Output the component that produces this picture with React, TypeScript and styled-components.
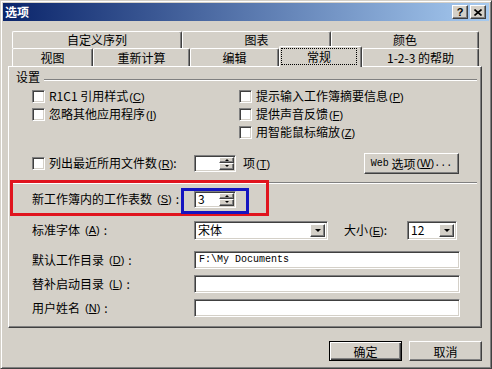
import React from 'react';
import styled, { createGlobalStyle, css } from 'styled-components';

const face = '#D4D0C8';
const shadow = '#808080';
const dark = '#404040';

const GlobalStyle = createGlobalStyle`
  html, body {
    margin: 0;
    padding: 0;
    background: ${face};
  }
  body {
    font-family: "Noto Sans CJK SC", "Liberation Sans", sans-serif;
    font-size: 12px;
    line-height: 14px;
    color: #000;
  }
`;

const raised = css`
  box-sizing: border-box;
  border: 1px solid;
  border-color: #fff ${dark} ${dark} #fff;
  box-shadow: inset -1px -1px ${shadow};
  background: ${face};
`;

const sunken = css`
  box-sizing: border-box;
  border: 1px solid;
  border-color: ${shadow} #fff #fff ${shadow};
  box-shadow: inset 1px 1px ${dark}, inset -1px -1px ${face};
  background: #fff;
`;

const Window = styled.div`
  position: relative;
  width: 492px;
  height: 369px;
  box-sizing: border-box;
  padding: 2px;
  border: 1px solid;
  border-color: ${face} ${dark} ${dark} ${face};
  box-shadow: inset 1px 1px #fff, inset -1px -1px ${shadow};
  background: ${face};
  display: flex;
  flex-direction: column;
`;

const TitleBar = styled.div`
  height: 18px;
  display: flex;
  align-items: center;
  padding: 0 3px 0 2px;
  background: linear-gradient(90deg, #0a246a, #a6caf0);
`;

const Title = styled.span`
  flex: 1;
  color: #fff;
  font-weight: bold;
  font-size: 12px;
`;

const TitleButton = styled.button`
  ${raised};
  width: 16px;
  height: 14px;
  padding: 0;
  margin-left: 2px;
  display: flex;
  align-items: center;
  justify-content: center;
  font-family: "Liberation Sans", sans-serif;
  font-weight: bold;
  font-size: 11px;
  line-height: 11px;
  color: #000;
`;

const TabStrip = styled.div`
  margin: 10px 0 0 9px;
  width: 467px;
  display: flex;
  flex-direction: column;
`;

const TabRow = styled.div<{ $h: number }>`
  height: ${(p) => p.$h}px;
  display: flex;
  align-items: flex-end;
`;

const Tab = styled.div<{ $w: number; $active?: boolean }>`
  width: ${(p) => p.$w}px;
  height: 100%;
  box-sizing: border-box;
  border-top: 1px solid #fff;
  border-left: 1px solid #fff;
  border-right: 1px solid ${dark};
  box-shadow: inset -1px 0 ${shadow};
  border-radius: 2px 2px 0 0;
  background: ${face};
  display: flex;
  align-items: center;
  justify-content: center;
  ${(p) =>
    p.$active &&
    css`
      position: relative;
      z-index: 1;
      height: 21px;
      margin-bottom: -1px;
      justify-content: flex-start;
      padding: 1px 0 0 1px;
      align-items: flex-start;
    `}
`;

const Focus = styled.span`
  width: 76px;
  height: 17px;
  box-sizing: border-box;
  border: 1px dotted #000;
  display: flex;
  align-items: center;
  justify-content: center;
`;

const Panel = styled.div`
  margin-left: 5px;
  width: 474px;
  height: 262px;
  box-sizing: border-box;
  border: 1px solid;
  border-color: #fff ${dark} ${dark} #fff;
  box-shadow: inset -1px -1px ${shadow};
  padding: 0 4px 0 1px;
  display: flex;
  flex-direction: column;
`;

const GroupHead = styled.div`
  height: 20px;
  margin-left: 6px;
  display: flex;
  align-items: center;
`;

const Etch = styled.div<{ $gap?: number }>`
  flex: 1;
  height: 0;
  border-top: 1px solid ${shadow};
  border-bottom: 1px solid #fff;
  margin-left: ${(p) => p.$gap ?? 0}px;
  margin-top: ${(p) => (p.$gap ? 6 : 0)}px;
`;

const CheckGrid = styled.div`
  margin-left: 22px;
  display: grid;
  grid-template-columns: 207px 1fr;
  grid-template-rows: repeat(3, 18px);
  grid-auto-flow: column;
`;

const CheckItem = styled.label`
  display: flex;
  align-items: center;
  gap: 4px;
  white-space: nowrap;
`;

const Box = styled.span`
  ${sunken};
  width: 13px;
  height: 13px;
  flex: none;
`;

const Row = styled.div<{ $top: number; $h: number; $flush?: boolean }>`
  margin-top: ${(p) => p.$top}px;
  height: ${(p) => p.$h}px;
  margin-left: ${(p) => (p.$flush ? 0 : 22)}px;
  display: flex;
  align-items: center;
  white-space: nowrap;
`;

const LabelCell = styled.div`
  width: 162px;
  flex: none;
  display: flex;
  align-items: center;
  gap: 4px;
`;

const Spin = styled.div`
  ${sunken};
  width: 42px;
  height: 17px;
  padding: 1px;
  display: flex;
`;

const SpinValue = styled.span`
  flex: 1;
  padding-left: 2px;
  display: flex;
  align-items: center;
`;

const SpinButtons = styled.div`
  width: 15px;
  display: flex;
  flex-direction: column;
`;

const SpinButton = styled.span<{ $down?: boolean }>`
  ${raised};
  flex: 1;
  display: flex;
  align-items: center;
  justify-content: center;
  &::after {
    content: '';
    border-left: 2px solid transparent;
    border-right: 2px solid transparent;
    ${(p) =>
      p.$down
        ? css`border-top: 2px solid #000;`
        : css`border-bottom: 2px solid #000;`}
  }
`;

const Unit = styled.span`
  margin-left: 7px;
`;

const PushButton = styled.button<{ $w: number; $default?: boolean }>`
  ${raised};
  width: ${(p) => p.$w}px;
  height: ${(p) => (p.$default ? 20 : 21)}px;
  padding: 0;
  font-family: "Noto Sans CJK SC", sans-serif;
  font-size: 12px;
  color: #000;
  display: flex;
  align-items: center;
  justify-content: center;
  ${(p) =>
    p.$default &&
    css`
      border: 1px solid #000;
      box-shadow: inset 1px 1px #fff, inset -1px -1px ${dark}, inset -2px -2px ${shadow};
    `}
`;

const DialogButton = styled(PushButton)`
  height: 20px;
`;

const WebButton = styled(PushButton)`
  margin-left: auto;
  margin-right: 18px;
`;

const Mono = styled.span`
  font-family: "Liberation Mono", monospace;
  font-size: 10px;
`;

const Key = styled.span`
  font-family: "Liberation Sans", sans-serif;
  font-size: 11px;
  margin-left: 1px;
`;

const Combo = styled.div<{ $w: number }>`
  ${sunken};
  width: ${(p) => p.$w}px;
  height: 19px;
  padding: 2px;
  display: flex;
`;

const ComboText = styled.span`
  flex: 1;
  padding-left: 1px;
  display: flex;
  align-items: center;
`;

const DropButton = styled.span`
  ${raised};
  width: 15px;
  display: flex;
  align-items: center;
  justify-content: center;
  &::after {
    content: '';
    margin-top: 1px;
    border-left: 3px solid transparent;
    border-right: 3px solid transparent;
    border-top: 3px solid #000;
  }
`;

const SizeLabel = styled.span`
  width: 63px;
  margin-left: 16px;
`;

const TextField = styled.div`
  ${sunken};
  width: 266px;
  height: 18px;
  padding-left: 4px;
  display: flex;
  align-items: center;
  font-family: "Liberation Mono", monospace;
  font-size: 10px;
`;

const Footer = styled.div`
  margin-top: 13px;
  padding-right: 7px;
  display: flex;
  justify-content: flex-end;
  gap: 7px;
`;

const Highlight = styled.div<{ $color: string; $x: number; $y: number; $w: number; $h: number }>`
  position: absolute;
  left: ${(p) => p.$x}px;
  top: ${(p) => p.$y}px;
  width: ${(p) => p.$w}px;
  height: ${(p) => p.$h}px;
  box-sizing: border-box;
  border: 3px solid ${(p) => p.$color};
  pointer-events: none;
`;

const K = ({ c }: { c: string }) => (
  <Key>
    (<u>{c}</u>)
  </Key>
);

const Check = ({ children }: { children: React.ReactNode }) => (
  <CheckItem>
    <Box />
    <span>{children}</span>
  </CheckItem>
);

const SpinBox = ({ value }: { value: string }) => (
  <Spin>
    <SpinValue>{value}</SpinValue>
    <SpinButtons>
      <SpinButton />
      <SpinButton $down />
    </SpinButtons>
  </Spin>
);

const backTabs = [
  { text: '自定义序列', w: 170 },
  { text: '图表', w: 149 },
  { text: '颜色', w: 148 },
];

const frontTabs = [
  { text: '视图', w: 81 },
  { text: '重新计算', w: 97 },
  { text: '编辑', w: 89 },
  { text: '常规', w: 83, active: true },
  { text: '1-2-3 的帮助', w: 117 },
];

export default function App() {
  return (
    <>
      <GlobalStyle />
      <Window>
        <TitleBar>
          <Title>选项</Title>
          <TitleButton>?</TitleButton>
          <TitleButton>
            <svg width="8" height="7" viewBox="0 0 8 7">
              <path d="M0.5 0.5 L7.5 6.5 M7.5 0.5 L0.5 6.5" stroke="#000" strokeWidth="1.6" />
            </svg>
          </TitleButton>
        </TitleBar>

        <TabStrip>
          <TabRow $h={17}>
            {backTabs.map((t) => (
              <Tab key={t.text} $w={t.w}>
                {t.text}
              </Tab>
            ))}
          </TabRow>
          <TabRow $h={18}>
            {frontTabs.map((t) => (
              <Tab key={t.text} $w={t.w} $active={t.active}>
                {t.active ? <Focus>{t.text}</Focus> : t.text}
              </Tab>
            ))}
          </TabRow>
        </TabStrip>

        <Panel>
          <GroupHead>
            <span>设置</span>
            <Etch $gap={4} />
          </GroupHead>
          <CheckGrid>
            <Check>
              R1C1 引用样式<K c="C" />
            </Check>
            <Check>
              忽略其他应用程序<K c="I" />
            </Check>
            <span />
            <Check>
              提示输入工作簿摘要信息<K c="P" />
            </Check>
            <Check>
              提供声音反馈<K c="F" />
            </Check>
            <Check>
              用智能鼠标缩放<K c="Z" />
            </Check>
          </CheckGrid>

          <Row $top={11} $h={22}>
            <LabelCell>
              <Box />
              <span>
                列出最近所用文件数<K c="R" />:
              </span>
            </LabelCell>
            <SpinBox value="" />
            <Unit>
              项<K c="T" />
            </Unit>
            <WebButton $w={95}>
              <Mono>Web</Mono>&nbsp;选项<K c="W" />
              <Mono>...</Mono>
            </WebButton>
          </Row>

          <Row $top={8} $h={2} $flush>
            <Etch />
          </Row>

          <Row $top={6} $h={18}>
            <LabelCell>
              新工作簿内的工作表数<K c="S" />:
            </LabelCell>
            <SpinBox value="3" />
          </Row>

          <Row $top={12} $h={20}>
            <LabelCell>
              标准字体<K c="A" />:
            </LabelCell>
            <Combo $w={134}>
              <ComboText>宋体</ComboText>
              <DropButton />
            </Combo>
            <SizeLabel>
              大小<K c="E" />:
            </SizeLabel>
            <Combo $w={50}>
              <ComboText>12</ComboText>
              <DropButton />
            </Combo>
          </Row>

          <Row $top={11} $h={18}>
            <LabelCell>
              默认工作目录<K c="D" />:
            </LabelCell>
            <TextField>F:\My Documents</TextField>
          </Row>

          <Row $top={6} $h={18}>
            <LabelCell>
              替补启动目录<K c="L" />:
            </LabelCell>
            <TextField />
          </Row>

          <Row $top={6} $h={18}>
            <LabelCell>
              用户姓名<K c="N" />:
            </LabelCell>
            <TextField />
          </Row>
        </Panel>

        <Footer>
          <DialogButton $w={73} $default>
            确定
          </DialogButton>
          <DialogButton $w={73}>取消</DialogButton>
        </Footer>

        <Highlight $color="#e0141e" $x={9} $y={179} $w={259} $h={36} />
        <Highlight $color="#1414c0" $x={180} $y={187} $w={68} $h={26} />
      </Window>
    </>
  );
}
